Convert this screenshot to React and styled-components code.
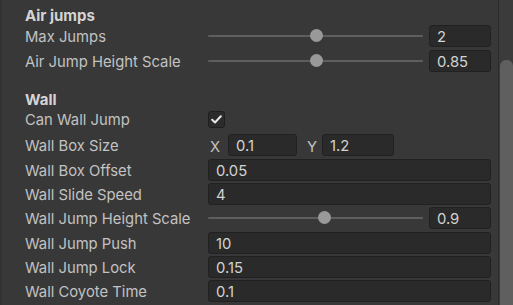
import React from 'react';
import styled, { createGlobalStyle } from 'styled-components';

const GlobalStyle = createGlobalStyle`
  html, body {
    margin: 0;
    padding: 0;
    background: #383838;
  }
  body {
    font-family: Inter, "Noto Sans", sans-serif;
  }
`;

const Window = styled.div`
  display: flex;
  width: 513px;
  height: 305px;
  overflow: hidden;
  background: #383838;
  border-left: 2px solid #323232;
  box-sizing: border-box;
`;

const Content = styled.div`
  flex: 1;
  padding: 7.6px 7px 0 23px;
  display: flex;
  flex-direction: column;
`;

const Section = styled.div`
  display: flex;
  flex-direction: column;
  gap: ${(p) => p.gap || 0}px;
  margin-top: ${(p) => p.top || 0}px;
`;

const Header = styled.div`
  font-size: 15px;
  line-height: 16px;
  font-weight: 700;
  color: #d4d4d4;
  margin-bottom: ${(p) => p.mb || 0}px;
`;

const Row = styled.div`
  display: grid;
  grid-template-columns: 183px 1fr;
  align-items: center;
  height: ${(p) => p.h || 22}px;
  margin-top: ${(p) => p.mt || 0}px;
`;

const Label = styled.div`
  font-size: 14.8px;
  line-height: 18px;
  color: #c2c2c2;
  white-space: nowrap;
  padding-top: ${(p) => (p.flat ? 0 : 2)}px;
`;

const Field = styled.div`
  height: 22px;
  box-sizing: border-box;
  background: #2a2a2a;
  border: 1px solid #212121;
  border-radius: 3px;
  padding: 2px 7px 0;
  display: flex;
  align-items: center;
  font-size: 14.8px;
  color: #d2d2d2;
  min-width: 0;
`;

const SliderWrap = styled.div`
  display: grid;
  grid-template-columns: 1fr 62px;
  gap: 6px;
  align-items: center;
`;

const Track = styled.div`
  position: relative;
  height: 2px;
  background: #5e5e5e;
  border-radius: 1px;
`;

const Thumb = styled.div`
  position: absolute;
  top: -6px;
  width: 13px;
  height: 13px;
  margin-left: -6.5px;
  border-radius: 50%;
  background: #999999;
`;

const Check = styled.div`
  width: 17px;
  height: 17px;
  box-sizing: border-box;
  background: #2b2b2b;
  border: 1px solid #1f1f1f;
  border-radius: 3px;
  display: flex;
  align-items: center;
  justify-content: center;
`;

const VectorWrap = styled.div`
  display: grid;
  grid-template-columns: repeat(3, 1fr);
  gap: 8px;
`;

const Comp = styled.div`
  display: grid;
  grid-template-columns: ${(p) => p.lw}px 1fr;
  align-items: center;
`;

const CompLabel = styled.span`
  font-size: 14.8px;
  color: #c2c2c2;
  padding: 3px 0 0 2px;
`;

const Scrollbar = styled.div`
  width: 14px;
  border-left: 1px solid #2c2c2c;
  background: #3b3b3b;
  display: flex;
  flex-direction: column;
`;

const ScrollThumb = styled.div`
  margin: 60px 0 0 1px;
  flex: 1;
  background: #5f5f5f;
  border-radius: 6px 6px 0 0;
`;

function Slider({ pos, value }) {
  return (
    <SliderWrap>
      <Track>
        <Thumb style={{ left: `${pos}px` }} />
      </Track>
      <Field>{value}</Field>
    </SliderWrap>
  );
}

function Prop({ label, children, h, mt, flat }) {
  return (
    <Row h={h} mt={mt}>
      <Label flat={flat}>{label}</Label>
      {children}
    </Row>
  );
}

export default function App() {
  return (
    <>
      <GlobalStyle />
      <Window>
        <Content>
          <Section gap={3}>
            <Header mb={-1.6}>Air jumps</Header>
            <Prop label="Max Jumps">
              <Slider pos={108} value="2" />
            </Prop>
            <Prop label="Air Jump Height Scale">
              <Slider pos={108} value="0.85" />
            </Prop>
          </Section>
          <Section top={20.4} gap={2.3}>
            <Header>Wall</Header>
            <Prop label="Can Wall Jump" h={18} flat>
              <Check>
                <svg width="11" height="9" viewBox="0 0 11 9">
                  <path d="M1.2 4.8 L4 7.5 L9.8 1.3" fill="none" stroke="#e8e8e8" strokeWidth="2" strokeLinecap="round" strokeLinejoin="round" />
                </svg>
              </Check>
            </Prop>
            <Prop label="Wall Box Size" mt={3.4}>
              <VectorWrap>
                <Comp lw={20}>
                  <CompLabel>X</CompLabel>
                  <Field>0.1</Field>
                </Comp>
                <Comp lw={17}>
                  <CompLabel>Y</CompLabel>
                  <Field>1.2</Field>
                </Comp>
              </VectorWrap>
            </Prop>
            <Prop label="Wall Box Offset">
              <Field>0.05</Field>
            </Prop>
            <Prop label="Wall Slide Speed">
              <Field>4</Field>
            </Prop>
            <Prop label="Wall Jump Height Scale">
              <Slider pos={116} value="0.9" />
            </Prop>
            <Prop label="Wall Jump Push">
              <Field>10</Field>
            </Prop>
            <Prop label="Wall Jump Lock">
              <Field>0.15</Field>
            </Prop>
            <Prop label="Wall Coyote Time">
              <Field>0.1</Field>
            </Prop>
          </Section>
        </Content>
        <Scrollbar>
          <ScrollThumb />
        </Scrollbar>
      </Window>
    </>
  );
}
